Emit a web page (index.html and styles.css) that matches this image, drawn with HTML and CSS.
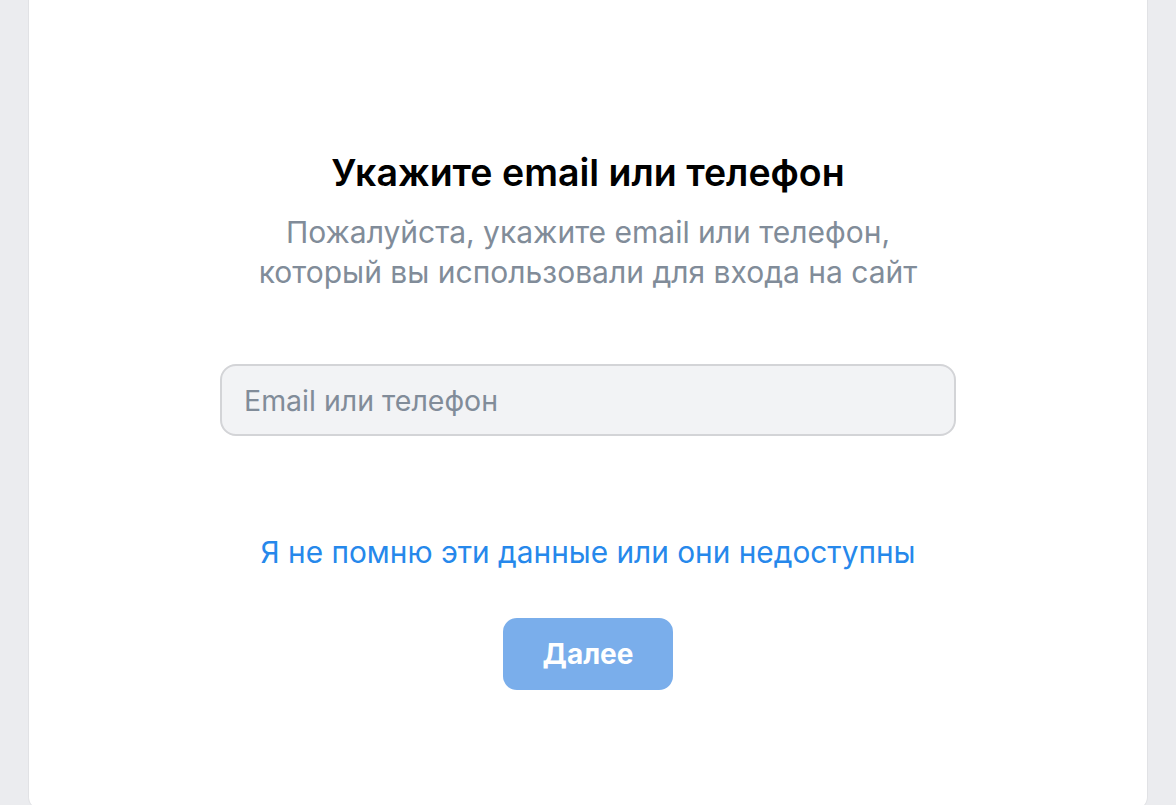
FILE: index.html
```html
<!DOCTYPE html>
<html lang="ru">
<head>
    <meta charset="UTF-8">
    <meta name="viewport" content="width=device-width, initial-scale=1.0">
    <title>Восстановление доступа</title>
    <link rel="stylesheet" href="styles.css">
</head>
<body>

    <div class="card">
        <h1 class="title">Укажите email или телефон</h1>
        <p class="subtitle">Пожалуйста, укажите email или телефон,<br>который вы использовали для входа на сайт</p>

        <!-- Login field -->
        <form class="form" id="restoreForm">
            <input class="field" type="text" placeholder="Email или телефон">
            <a class="link" href="#">Я не помню эти данные или они недоступны</a>
            <button class="btn" type="submit" disabled>Далее</button>
        </form>
    </div>

</body>
</html>
```

FILE: styles.css
```css
/* Page background and card */
body {
    margin: 0;
    padding: 0 29px;
    background-color: #ebecef;
    font-family: Inter, "Noto Sans", sans-serif;
    overflow: hidden;
}
.card {
    height: 829px;
    margin-top: -20px;
    padding-top: 169px;
    box-sizing: border-box;
    background-color: #fff;
    border-radius: 12px;
    box-shadow: 0 0 0 1px rgba(0, 0, 0, 0.04);
    text-align: center;
}
.title {
    margin: 0;
    font-size: 37.5px;
    font-weight: 600;
    line-height: 48px;
    color: #000;
}
.subtitle {
    margin: 15px 0 0;
    font-size: 30px;
    line-height: 40px;
    color: #818c99;
}
.form {
    display: flex;
    flex-direction: column;
    align-items: center;
}
.field {
    width: 736px;
    height: 72px;
    margin-top: 72px;
    padding: 0 22px;
    box-sizing: border-box;
    font-family: inherit;
    font-size: 28.5px;
    color: #000;
    background-color: #f2f3f5;
    border: 2px solid #d3d4d7;
    border-radius: 16px;
    outline: none;
}
.field::placeholder {
    color: #818c99;
}
.link {
    margin-top: 96px;
    font-size: 29.8px;
    line-height: 40px;
    color: #2688eb;
    text-decoration: none;
}
.btn {
    width: 170px;
    height: 72px;
    margin-top: 46px;
    font-family: inherit;
    font-size: 28px;
    font-weight: 700;
    color: #fff;
    background-color: #7aaeeb;
    border: none;
    border-radius: 14px;
}
```
